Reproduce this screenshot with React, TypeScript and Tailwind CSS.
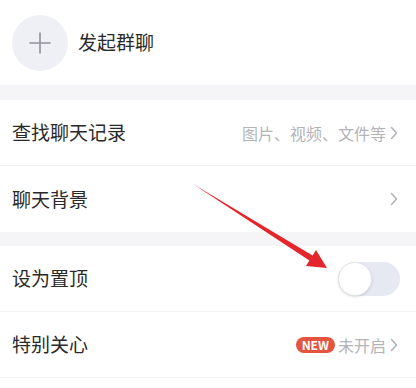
import React from 'react';

const font = { fontFamily: '"Noto Sans CJK SC", "Noto Sans", sans-serif' };

function Chevron() {
  return (
    <svg width="8" height="14" viewBox="0 0 8 14" className="ml-1 shrink-0">
      <path d="M1.5 1.5 L6.5 7 L1.5 12.5" fill="none" stroke="#b4b4b8" strokeWidth="1.6" strokeLinecap="round" strokeLinejoin="round" />
    </svg>
  );
}

function Row({ label, children, border = true }: { label: string; children?: React.ReactNode; border?: boolean }) {
  return (
    <div className={`flex h-[66px] items-center justify-between pl-3 pr-[18px] ${border ? 'border-b border-[#f1f1f3]' : ''}`}>
      <span className="text-[19px] text-[#2a2a2a]">{label}</span>
      <div className="flex items-center">{children}</div>
    </div>
  );
}

export default function App() {
  return (
    <div className="relative h-[388px] w-[416px] overflow-hidden bg-white" style={font}>
      <div className="flex h-[85px] items-center gap-[10px] pl-3">
        <div className="flex h-[56px] w-[56px] items-center justify-center rounded-full bg-[#eef0f5]">
          <svg width="24" height="24" viewBox="0 0 24 24">
            <path d="M12 2 V22 M2 12 H22" stroke="#8e929c" strokeWidth="1.6" strokeLinecap="round" />
          </svg>
        </div>
        <span className="text-[19px] text-[#2a2a2a]">发起群聊</span>
      </div>

      <div className="h-[15px] bg-[#f5f5f7]" />

      <Row label="查找聊天记录">
        <span className="text-[16px] text-[#b4b4b8]">图片、视频、文件等</span>
        <Chevron />
      </Row>
      <Row label="聊天背景" border={false}>
        <Chevron />
      </Row>

      <div className="h-[14px] bg-[#f5f5f7]" />

      <Row label="设为置顶">
        <div className="relative mr-[-2px] h-[34px] w-[62px] rounded-full bg-[#e6e9f2]">
          <div className="absolute left-0 top-0 h-[34px] w-[34px] rounded-full border border-[#e2e4ea] bg-white shadow-sm" />
        </div>
      </Row>
      <Row label="特别关心">
        <span className="mr-[3px] flex h-[16px] items-center rounded-full bg-[#e4553f] px-[6px] text-[12px] font-bold leading-none text-white">
          NEW
        </span>
        <span className="text-[16px] text-[#b4b4b8]">未开启</span>
        <Chevron />
      </Row>

      <svg className="pointer-events-none absolute left-0 top-0" width="416" height="388" viewBox="0 0 416 388">
        <polygon points="193,184 312.6,255.5 316,250 327,268 306,266 309.4,260.5" fill="#e3262b" />
      </svg>
    </div>
  );
}
